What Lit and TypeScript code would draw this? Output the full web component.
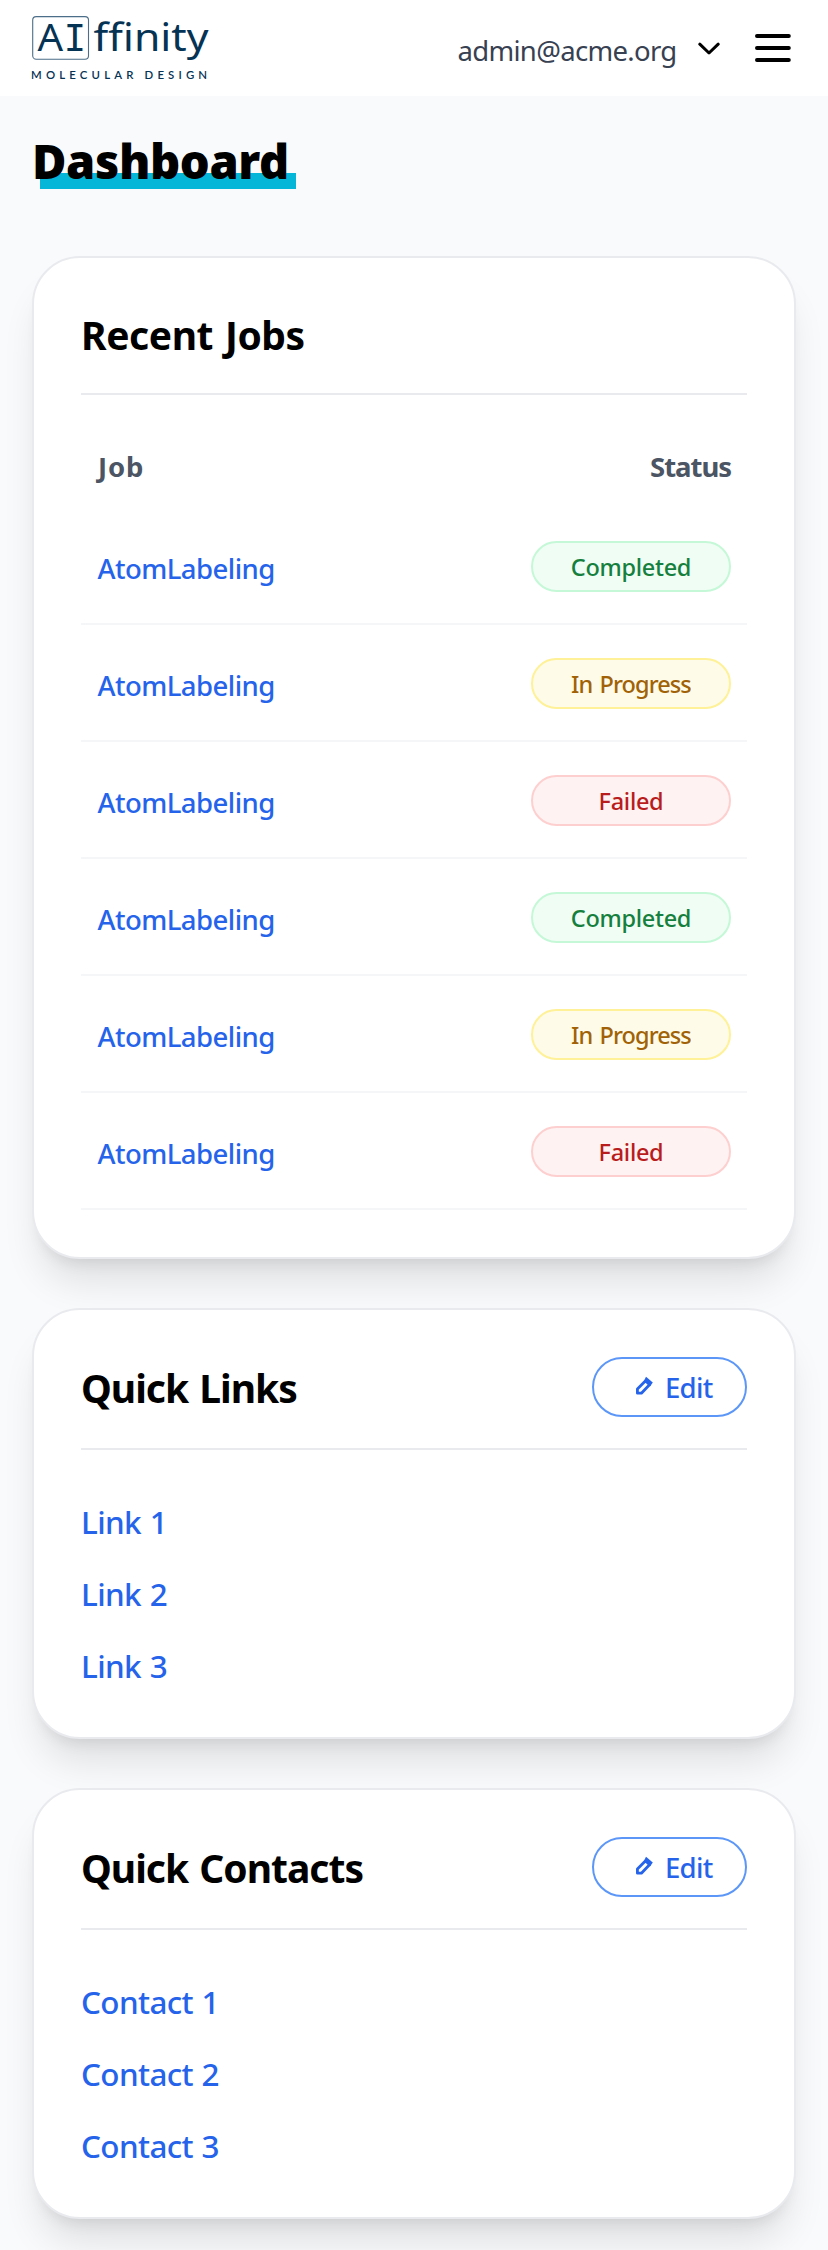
import { LitElement, html, css, svg } from "lit";
import { customElement, property } from "lit/decorators.js";

type Status = "completed" | "progress" | "failed";

const STATUS_LABEL: Record<Status, string> = {
  completed: "Completed",
  progress: "In Progress",
  failed: "Failed",
};

const JOBS: { name: string; status: Status }[] = [
  { name: "AtomLabeling", status: "completed" },
  { name: "AtomLabeling", status: "progress" },
  { name: "AtomLabeling", status: "failed" },
  { name: "AtomLabeling", status: "completed" },
  { name: "AtomLabeling", status: "progress" },
  { name: "AtomLabeling", status: "failed" },
];

const logo = svg`<svg class="logo" width="180" height="72" viewBox="0 0 180 72" fill="#053354">
  <rect x="0.7" y="4.6" width="55.8" height="42.6" rx="3.5" fill="none" stroke="#4d6e88" stroke-width="1.1"/>
  <text class="mark" x="5.6" y="39" textLength="25.6" lengthAdjust="spacingAndGlyphs">A</text>
  <text class="mono" x="31.8" y="39">I</text>
  <text class="mark" x="61.5" y="39" textLength="115" lengthAdjust="spacingAndGlyphs">ffinity</text>
  <text class="sub" x="-0.9" y="66.8" textLength="176" lengthAdjust="spacing">MOLECULAR DESIGN</text>
</svg>`;

@customElement("app-header")
export class AppHeader extends LitElement {
  static styles = css`
    :host { display: block; }
    .bar {
      height: 96px;
      box-sizing: border-box;
      padding: 12px 37px 0 32px;
      background: #fff;
      display: flex;
      align-items: flex-start;
    }
    .logo { display: block; overflow: visible; margin-right: auto; }
    .mark { font: 400 37.5px "Noto Sans", sans-serif; }
    .mono { font: 400 37px "DejaVu Sans Mono", monospace; }
    .sub { font: 600 11.4px "Lato", sans-serif; }
    .email {
      font: 400 27.5px/40px "Noto Sans", sans-serif;
      letter-spacing: -0.69px;
      color: #374151;
      margin: 19px 21.5px 0 0;
    }
    .chevron { display: block; margin: 28px 34px 0 0; }
    .menu { display: block; margin-top: 20px; }
  `;
  render() {
    return html`<header class="bar">
      ${logo}
      <span class="email">admin@acme.org</span>
      <svg class="chevron" width="22" height="16" viewBox="0 0 22 16" fill="none" stroke="#000" stroke-width="3" stroke-linecap="round" stroke-linejoin="round"><path d="M1.8 4.2 11 13 20.2 4.2"/></svg>
      <svg class="menu" width="37" height="32" viewBox="0 0 37 32" stroke="#000" stroke-width="4" stroke-linecap="round"><path d="M3 4H34.8M3 16H34.8M3 28H34.8"/></svg>
    </header>`;
  }
}

@customElement("status-pill")
export class StatusPill extends LitElement {
  static styles = css`
    :host { display: block; }
    .pill {
      box-sizing: border-box;
      width: 200px;
      height: 51px;
      border: 2px solid;
      border-radius: 26px;
      text-align: center;
      font: 500 23.5px/49px "Noto Sans", sans-serif;
      letter-spacing: -0.3px;
    }
    .completed { background: #f0fdf4; border-color: #c5f8d7; color: #15803d; }
    .progress { background: #fefce8; border-color: #fef197; color: #a16207; letter-spacing: -0.9px; word-spacing: 2px; }
    .failed { background: #fef2f2; border-color: #fecfcf; color: #b91c1c; }
  `;
  @property() status: Status = "completed";
  render() {
    return html`<div class="pill ${this.status}">${STATUS_LABEL[this.status]}</div>`;
  }
}

@customElement("dash-card")
export class DashCard extends LitElement {
  static styles = css`
    :host { display: block; }
    .card {
      box-sizing: border-box;
      height: 100%;
      padding: 47px 47px 0;
      background: #fff;
      border: 2px solid #e9eaee;
      border-radius: 48px;
      box-shadow: 0 30px 37.5px -7.5px rgba(0, 0, 0, 0.1), 0 12px 15px -9px rgba(0, 0, 0, 0.1);
    }
    .head {
      display: flex;
      justify-content: space-between;
      align-items: center;
      height: 60px;
      padding-bottom: 31px;
      border-bottom: 2px solid #e9eaed;
    }
    .short { height: 57px; }
    h2 {
      margin: 1px 0 0;
      font: 700 39px/60px "Noto Sans", sans-serif;
      letter-spacing: -1px;
      word-spacing: 2px;
      color: #000;
    }
    .short h2 { letter-spacing: -0.4px; margin-top: 2px; }
    .edit {
      box-sizing: border-box;
      width: 155px;
      height: 60px;
      border: 2px solid #5c97f8;
      border-radius: 30px;
      padding: 0 0 0 40px;
      background: #fff;
      display: flex;
      align-items: center;
      gap: 11px;
      font: 500 27.5px/56px "Noto Sans", sans-serif;
      letter-spacing: -0.7px;
      color: #2563eb;
    }
    .edit span { padding-top: 1px; }
    .edit svg { display: block; margin-bottom: 2px; }
  `;
  @property() heading = "";
  @property({ type: Boolean }) editable = false;
  render() {
    return html`<section class="card">
      <div class="head ${this.editable ? "" : "short"}">
        <h2>${this.heading}</h2>
        ${this.editable
          ? html`<button class="edit">
              <svg width="20" height="20" viewBox="0 0 20 20" fill="none" stroke="#2563eb" stroke-width="2.8"><path d="M3.4 17.2V12.9L11.6 4.8 15.5 8.7 7.4 17.2Z" stroke-linejoin="round"/><path d="M12 0.8 18.8 6.6 16.2 10.2 10.2 4.4Z" fill="#2563eb" stroke="none"/></svg>
              <span>Edit</span>
            </button>`
          : ""}
      </div>
      <slot></slot>
    </section>`;
  }
}

@customElement("app-root")
export class AppRoot extends LitElement {
  static styles = css`
    :host {
      display: block;
      height: 2250px;
      overflow: hidden;
      background: #f9fafc;
      font-family: "Noto Sans", sans-serif;
    }
    main { padding: 0 32px; }
    .title {
      width: 264px;
      margin: 0;
      padding: 38px 0 0 0;
      height: 122px;
      font: 900 47px/54px "Noto Sans", sans-serif;
      letter-spacing: -0.39px;
      color: #000;
    }
    .marked {
      display: block;
      height: 55px;
      background: linear-gradient(#06b6d8, #06b6d8) 8px 39px / 256px 16px no-repeat;
    }
    .cards { display: flex; flex-direction: column; gap: 49px; }
    .jobs { height: 1003px; }
    .list { height: 431px; }
    .thead, .row {
      display: flex;
      justify-content: space-between;
      padding: 0 16px;
    }
    .thead {
      font: 700 27.5px/40px "Noto Sans", sans-serif;
      color: #4b5563;
      padding-top: 51.5px;
      height: 61.5px;
    }
    .job { letter-spacing: 0.8px; padding-left: 1px; }
    .status { letter-spacing: -1.04px; }
    .row {
      box-sizing: border-box;
      height: 117px;
      padding-top: 32.5px;
      border-bottom: 2px solid #f5f6f7;
    }
    a {
      color: #2563eb;
      text-decoration: none;
      font-weight: 500;
    }
    .row a { font-size: 27.5px; line-height: 56px; letter-spacing: -0.54px; padding-left: 0.5px; }
    .links { display: flex; flex-direction: column; padding-top: 48px; }
    .links a { font-size: 31.4px; line-height: 48px; height: 72px; letter-spacing: -0.6px; word-spacing: 1px; }
  `;
  render() {
    return html`
      <app-header></app-header>
      <main>
        <h1 class="title"><span class="marked">Dashboard</span></h1>
        <div class="cards">
          <dash-card class="jobs" heading="Recent Jobs">
            <div class="thead"><span class="job">Job</span><span class="status">Status</span></div>
            ${JOBS.map((j) => html`<div class="row"><a>${j.name}</a><status-pill .status=${j.status}></status-pill></div>`)}
          </dash-card>
          <dash-card class="list" heading="Quick Links" editable>
            <nav class="links">${[1, 2, 3].map((n) => html`<a>Link ${n}</a>`)}</nav>
          </dash-card>
          <dash-card class="list" heading="Quick Contacts" editable>
            <nav class="links">${[1, 2, 3].map((n) => html`<a>Contact ${n}</a>`)}</nav>
          </dash-card>
        </div>
      </main>
    `;
  }
}
